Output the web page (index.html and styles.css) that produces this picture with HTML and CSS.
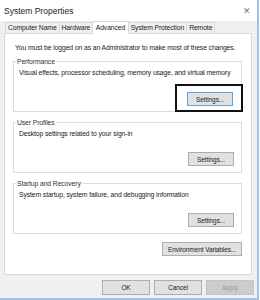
FILE: index.html
```html
<!DOCTYPE html>
<html lang="en">
<head>
    <meta charset="UTF-8">
    <title>System Properties</title>
    <link rel="stylesheet" href="styles.css">
</head>
<body>
    <div class="window">
        <div class="titlebar">
            <span class="title">System Properties</span>
            <span class="close">&#x2715;</span>
        </div>
        <div class="tabs">
            <span class="tab">Computer Name</span>
            <span class="tab">Hardware</span>
            <span class="tab active">Advanced</span>
            <span class="tab">System Protection</span>
            <span class="tab">Remote</span>
        </div>
        <div class="panel">
            <p class="note">You must be logged on as an Administrator to make most of these changes.</p>

            <fieldset class="group">
                <legend>Performance</legend>
                <p>Visual effects, processor scheduling, memory usage, and virtual memory</p>
                <div class="group-actions">
                    <span class="highlight"><button class="btn focused">Settings...</button></span>
                </div>
            </fieldset>

            <fieldset class="group">
                <legend>User Profiles</legend>
                <p>Desktop settings related to your sign-in</p>
                <div class="group-actions">
                    <button class="btn">Settings...</button>
                </div>
            </fieldset>

            <fieldset class="group">
                <legend>Startup and Recovery</legend>
                <p>System startup, system failure, and debugging information</p>
                <div class="group-actions">
                    <button class="btn">Settings...</button>
                </div>
            </fieldset>

            <div class="env-row">
                <button class="btn env">Environment Variables...</button>
            </div>
        </div>
        <div class="footer">
            <button class="btn dlg">OK</button>
            <button class="btn dlg">Cancel</button>
            <button class="btn dlg" disabled>Apply</button>
        </div>
    </div>
</body>
</html>
```

FILE: styles.css
```css
body {
    margin: 0;
    width: 260px;
    height: 300px;
    overflow: hidden;
    font-family: "Liberation Sans", Arial, sans-serif;
    font-size: 6.8px;
    letter-spacing: -0.1px;
    color: #1a1a1a;
    background-color: #ffffff;
}

.window {
    width: 257px;
    height: 298px;
    background-color: #f0f0f0;
    border-right: 2px solid #9fc3e6;
    border-bottom: 2px solid #9fc3e6;
    display: flex;
    flex-direction: column;
}

.titlebar {
    height: 21px;
    background-color: #ffffff;
    display: flex;
    align-items: center;
    justify-content: space-between;
    padding: 0 6px 0 4px;
}

.title {
    font-size: 8.5px;
    letter-spacing: 0;
    color: #222;
}

.close {
    font-size: 9px;
    color: #777;
}

.tabs {
    display: flex;
    align-items: flex-end;
    height: 12px;
    padding-left: 5px;
}

.tab {
    height: 10px;
    line-height: 10px;
    padding: 0 2px;
    border: 1px solid #d9d9d9;
    border-bottom: none;
    margin-right: -1px;
    background-color: #f0f0f0;
    white-space: nowrap;
}

.tab.active {
    height: 12px;
    line-height: 11px;
    padding: 0 2.5px;
    background-color: #ffffff;
    position: relative;
    top: 1px;
    z-index: 1;
}

.panel {
    height: 242px;
    margin: 0 5px 0 4px;
    background-color: #ffffff;
    border: 1px solid #d9d9d9;
    padding: 0 9px 0 8px;
    box-sizing: border-box;
}

.note {
    margin: 10px 0 0 2px;
    white-space: nowrap;
}

.group {
    margin: 7px 0 0 0;
    padding: 0 7px 0 5px;
    height: 54px;
    box-sizing: border-box;
    border: 1px solid #dcdcdc;
    display: flex;
    flex-direction: column;
}

.group legend {
    padding: 0 1px;
    margin-left: -3px;
    color: #333;
}

.group p {
    margin: 4px 0 0 0;
    white-space: nowrap;
}

.group-actions {
    margin-top: auto;
    margin-bottom: 6px;
    display: flex;
    justify-content: flex-end;
}

.highlight {
    border: 2px solid #111;
    padding: 6px 8px 4px 10px;
    margin: -7px -9px -7px 0;
}

.btn {
    font-family: "Liberation Sans", Arial, sans-serif;
    font-size: 6.5px;
    letter-spacing: -0.1px;
    color: #222;
    height: 14px;
    width: 46px;
    padding: 0;
    background-color: #e1e1e1;
    border: 1px solid #adadad;
}

.btn.focused {
    border-color: #5fa3e0;
}

.env-row {
    display: flex;
    justify-content: flex-end;
    margin-top: 8px;
}

.btn.env {
    width: 80px;
}

.footer {
    display: flex;
    justify-content: flex-end;
    gap: 4px;
    padding: 5px 3px 0 0;
}

.btn.dlg {
    width: 48px;
    height: 15px;
}

.btn:disabled {
    background-color: #cccccc;
    border-color: #c4c4c4;
    color: #9a9a9a;
}
```
